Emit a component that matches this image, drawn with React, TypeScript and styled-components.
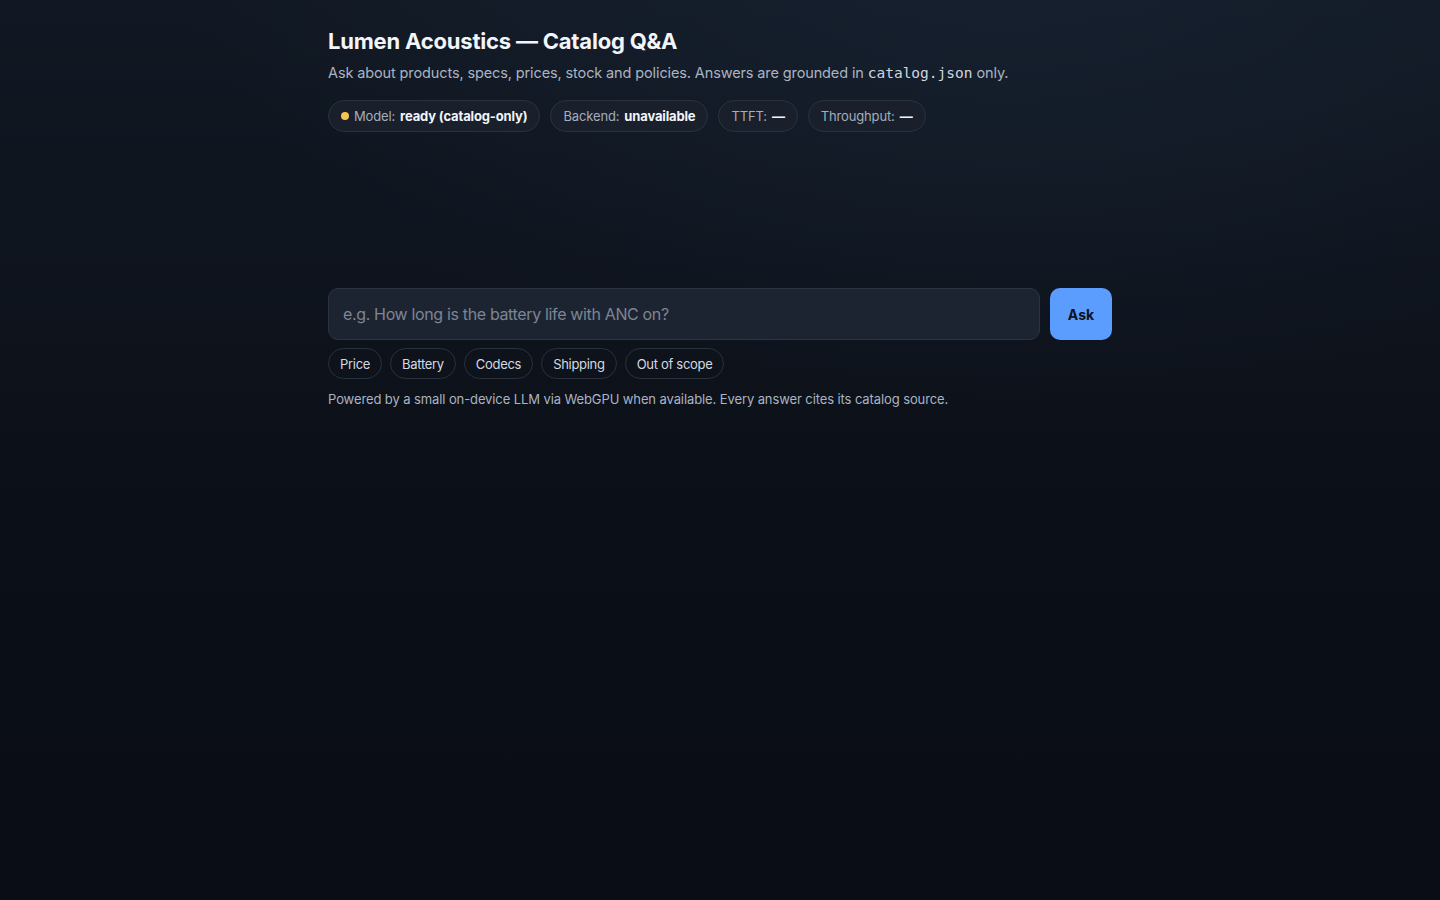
import styled, { createGlobalStyle } from "styled-components";
import type { FunctionComponent } from "react";

// Global page styles
const GlobalStyle = createGlobalStyle`
    html, body {
        margin: 0;
        min-height: 100%;
    }
    body {
        background:
            radial-gradient(1200px 700px at 70% -10%, #172130 0%, rgba(23, 33, 48, 0) 70%),
            linear-gradient(180deg, #111823 0%, #0b0f17 60%, #0a0d15 100%);
        background-color: #0b0f17;
        min-height: 900px;
        color: #e8edf4;
        font-family: Inter, "Noto Sans", sans-serif;
    }
`;

const Page = styled.main`
    width: 784px;
    margin: 0 auto;
    padding-top: 27px;
`;

const Title = styled.h1`
    margin: 0;
    font-size: 22px;
    line-height: 28px;
    font-weight: 700;
    letter-spacing: -0.2px;
    color: #f2f5f9;
`;

const Subtitle = styled.p`
    margin: 7px 0 0;
    font-size: 14.5px;
    line-height: 22px;
    letter-spacing: -0.12px;
    color: #aab4c2;
    code {
        font-family: "DejaVu Sans Mono", "Liberation Mono", monospace;
        font-size: 14.5px;
        letter-spacing: 0;
        color: #d0d7e1;
    }
`;

const StatusRow = styled.div`
    display: flex;
    gap: 10px;
    margin-top: 16px;
`;

const Pill = styled.div`
    display: flex;
    align-items: center;
    gap: 5px;
    height: 30px;
    padding: 0 12px;
    border-radius: 999px;
    background: #19202b;
    border: 1px solid #2a3240;
    font-size: 13px;
    letter-spacing: -0.15px;
    color: #a4aebc;
`;

const Dot = styled.span<{ $color: string }>`
    width: 8px;
    height: 8px;
    border-radius: 50%;
    background: ${(p) => p.$color};
    margin-right: 0;
`;

const PillValue = styled.strong`
    font-weight: 700;
    color: #f2f5f9;
`;

const Log = styled.section`
    height: 156px;
`;

const AskForm = styled.form`
    display: flex;
    gap: 10px;
`;

const QuestionInput = styled.input`
    flex: 1;
    height: 52px;
    box-sizing: border-box;
    padding: 0 14px;
    border-radius: 10px;
    background: #1d2431;
    border: 1px solid #2c3443;
    color: #e8edf4;
    font-family: Inter, "Noto Sans", sans-serif;
    font-size: 16px;
    letter-spacing: -0.35px;
    outline: none;
    &::placeholder {
        color: #7d8593;
    }
`;

const AskButton = styled.button`
    width: 62px;
    height: 52px;
    border: none;
    border-radius: 10px;
    background: #5b9dff;
    color: #0b1220;
    font-family: Inter, "Noto Sans", sans-serif;
    font-size: 14px;
    font-weight: 700;
`;

const ChipRow = styled.div`
    display: flex;
    gap: 8px;
    margin-top: 8px;
`;

const Chip = styled.button`
    height: 31px;
    padding: 0 11px;
    border-radius: 999px;
    background: #0e131b;
    border: 1px solid #2a313e;
    color: #d3d9e2;
    font-family: Inter, "Noto Sans", sans-serif;
    font-size: 13px;
    letter-spacing: -0.3px;
`;

const Footnote = styled.p`
    margin: 11px 0 0;
    font-size: 13px;
    line-height: 18px;
    letter-spacing: -0.1px;
    color: #aab4c2;
`;

const suggestions = ["Price", "Battery", "Codecs", "Shipping", "Out of scope"];

// Define Page
const App: FunctionComponent = () => {
    return (
        <>
            <GlobalStyle />
            <Page>
                <Title>Lumen Acoustics — Catalog Q&amp;A</Title>
                <Subtitle>
                    Ask about products, specs, prices, stock and policies. Answers are grounded in{" "}
                    <code>catalog.json</code> only.
                </Subtitle>
                <StatusRow>
                    <Pill>
                        <Dot $color="#f6c453" />
                        Model: <PillValue>ready (catalog-only)</PillValue>
                    </Pill>
                    <Pill>
                        Backend: <PillValue>unavailable</PillValue>
                    </Pill>
                    <Pill>
                        TTFT: <PillValue>—</PillValue>
                    </Pill>
                    <Pill>
                        Throughput: <PillValue>—</PillValue>
                    </Pill>
                </StatusRow>
                <Log />
                <AskForm onSubmit={(e) => e.preventDefault()}>
                    <QuestionInput placeholder="e.g. How long is the battery life with ANC on?" />
                    <AskButton type="submit">Ask</AskButton>
                </AskForm>
                <ChipRow>
                    {suggestions.map((s) => (
                        <Chip key={s} type="button">
                            {s}
                        </Chip>
                    ))}
                </ChipRow>
                <Footnote>
                    Powered by a small on-device LLM via WebGPU when available. Every answer cites its catalog source.
                </Footnote>
            </Page>
        </>
    );
};

export default App;
